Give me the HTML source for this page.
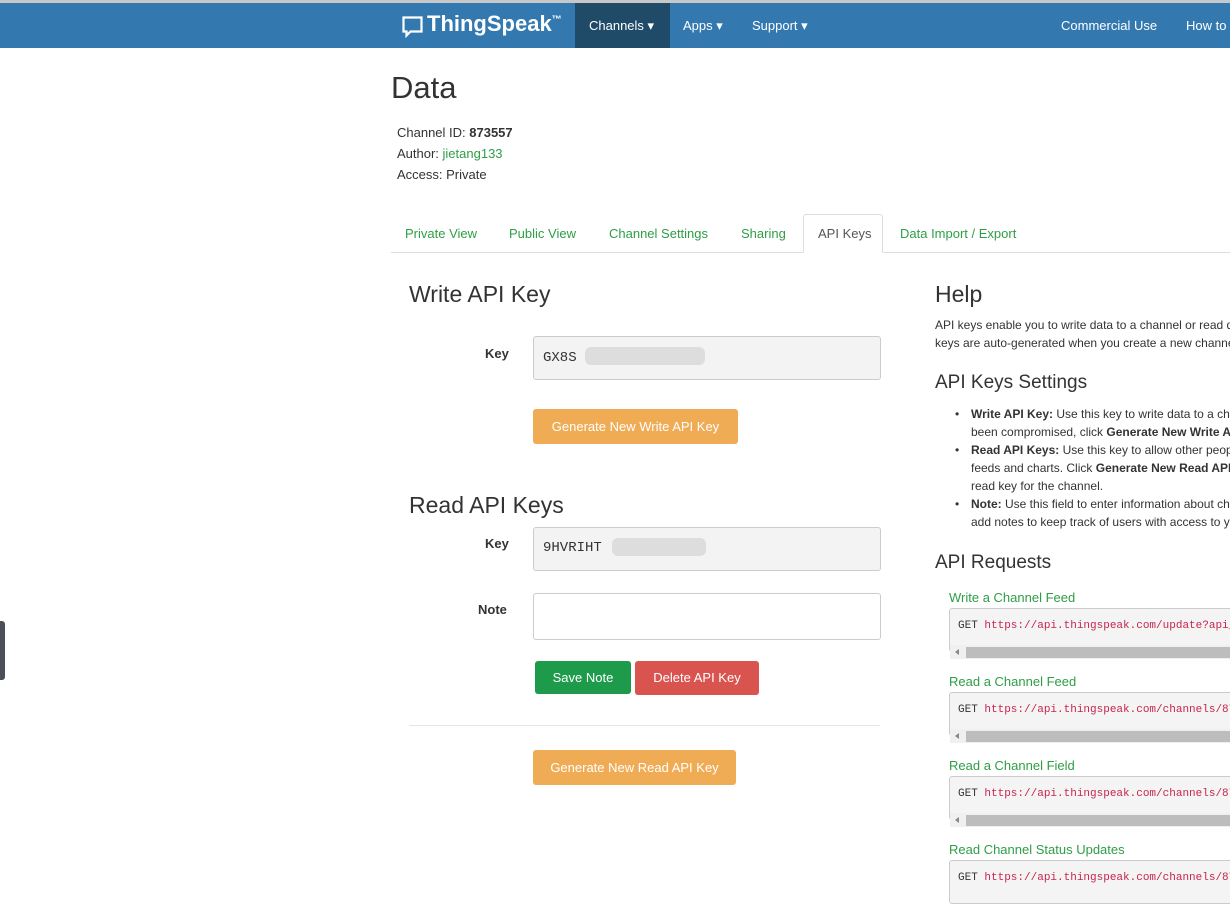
<!DOCTYPE html>
<html><head><meta charset="utf-8"><style>
*{box-sizing:border-box;margin:0;padding:0}
body{width:1230px;height:876px;overflow:hidden;background:#fff;font-family:"Liberation Sans",sans-serif;color:#333;position:relative;font-size:13px}
.a{position:absolute;white-space:nowrap}
.nav{position:absolute;left:0;top:0;width:1230px;height:48px;background:#3379b0;border-top:3px solid #c8c8c8}
.nl{color:#fff;font-size:13px}
.green{color:#2e9e46}
.h{font-weight:300;color:#333}
.inp{position:absolute;background:#f3f3f3;border:1px solid #ccc;border-radius:3px}
.btn{position:absolute;color:#fff;font-size:13px;text-align:center;border-radius:3px}
.pre{position:absolute;left:949px;width:290px;height:44px;background:#f4f4f4;border:1px solid #ccc;border-radius:3px;font-family:"Liberation Mono",monospace;font-size:11px;color:#333;padding:11px 8px;white-space:nowrap;overflow:hidden}
.pre span{color:#c7254e}
.sb{position:absolute;left:950px;width:290px;height:14px;background:#f0f0f0}
.sb i{position:absolute;left:16px;top:2px;right:0;height:11px;background:#bdbdbd}
.sb b{position:absolute;left:5px;top:4px;border-right:4px solid #888;border-top:3px solid transparent;border-bottom:3px solid transparent}
ul.hl{position:absolute;left:971px;top:405px;font-size:12px;line-height:18px;list-style:none;white-space:nowrap;width:259px}
ul.hl li{position:relative}
ul.hl li:before{content:"•";position:absolute;left:-16px}
</style></head><body>
<div class="nav">
 <svg class="a" style="left:402px;top:13px" width="22" height="22" viewBox="0 0 22 22"><path d="M1.5 1.5h18v14h-11l-4 4v-4h-3z" fill="none" stroke="#fff" stroke-width="2.2"/></svg>
 <div class="a" style="left:427px;top:8px;color:#fff;font-size:22px;font-weight:bold">ThingSpeak<sup style="font-size:10px">™</sup></div>
 <div class="a" style="left:575px;top:0;width:95px;height:45px;background:#1f4a68"></div>
 <div class="a nl" style="left:589px;top:15px">Channels ▾</div>
 <div class="a nl" style="left:683px;top:15px">Apps ▾</div>
 <div class="a nl" style="left:752px;top:15px">Support ▾</div>
 <div class="a nl" style="left:1061px;top:15px">Commercial Use</div>
 <div class="a nl" style="left:1186px;top:15px">How to</div>
</div>
<div class="a h" style="left:391px;top:70px;font-size:31px">Data</div>
<div class="a" style="left:397px;top:122px;line-height:21px">Channel ID: <b>873557</b><br>Author: <span class="green">jietang133</span><br>Access: Private</div>
<div class="a" style="left:391px;top:252px;width:839px;border-top:1px solid #ddd"></div>
<div class="a" style="left:803px;top:214px;width:80px;height:39px;border:1px solid #ddd;border-bottom:1px solid #fff;background:#fff;border-radius:3px 3px 0 0"></div>
<div class="a green" style="left:405px;top:226px">Private View</div>
<div class="a green" style="left:509px;top:226px">Public View</div>
<div class="a green" style="left:609px;top:226px">Channel Settings</div>
<div class="a green" style="left:741px;top:226px">Sharing</div>
<div class="a" style="left:818px;top:226px;color:#555">API Keys</div>
<div class="a green" style="left:900px;top:226px">Data Import / Export</div>

<div class="a h" style="left:409px;top:281px;font-size:23px">Write API Key</div>
<div class="a" style="left:485px;top:346px;font-weight:bold">Key</div>
<div class="inp" style="left:533px;top:336px;width:348px;height:44px"></div>
<div class="a" style="left:543px;top:350px;font-family:'Liberation Mono',monospace;font-size:14px">GX8S</div>
<div class="a" style="left:585px;top:347px;width:120px;height:18px;background:#ddd;border-radius:6px"></div>
<div class="btn" style="left:533px;top:409px;width:205px;height:35px;background:#efac55;line-height:35px">Generate New Write API Key</div>

<div class="a h" style="left:409px;top:492px;font-size:23px">Read API Keys</div>
<div class="a" style="left:485px;top:536px;font-weight:bold">Key</div>
<div class="inp" style="left:533px;top:527px;width:348px;height:44px"></div>
<div class="a" style="left:543px;top:540px;font-family:'Liberation Mono',monospace;font-size:14px">9HVRIHT</div>
<div class="a" style="left:612px;top:538px;width:94px;height:18px;background:#ddd;border-radius:6px"></div>
<div class="a" style="left:478px;top:602px;font-weight:bold">Note</div>
<div class="a" style="left:533px;top:593px;width:348px;height:47px;border:1px solid #ccc;border-radius:3px"></div>
<div class="btn" style="left:535px;top:661px;width:96px;height:33px;background:#1d9b4b;line-height:33px">Save Note</div>
<div class="btn" style="left:635px;top:661px;width:124px;height:34px;background:#d9534f;line-height:34px">Delete API Key</div>
<div class="a" style="left:409px;top:725px;width:471px;border-top:1px solid #e5e5e5"></div>
<div class="btn" style="left:533px;top:750px;width:203px;height:35px;background:#efac55;line-height:35px">Generate New Read API Key</div>

<div class="a h" style="left:935px;top:281px;font-size:23px">Help</div>
<div class="a" style="left:935px;top:316px;font-size:12px;line-height:18px">API keys enable you to write data to a channel or read d<br>keys are auto-generated when you create a new channel</div>
<div class="a h" style="left:935px;top:372px;font-size:19px">API Keys Settings</div>
<ul class="hl">
<li><b>Write API Key:</b> Use this key to write data to a chan<br>been compromised, click <b>Generate New Write API</b></li>
<li><b>Read API Keys:</b> Use this key to allow other people<br>feeds and charts. Click <b>Generate New Read API K</b><br>read key for the channel.</li>
<li><b>Note:</b> Use this field to enter information about ch<br>add notes to keep track of users with access to yo</li>
</ul>
<div class="a h" style="left:935px;top:552px;font-size:19px">API Requests</div>
<div class="a green" style="left:949px;top:590px">Write a Channel Feed</div>
<div class="pre" style="top:608px">GET <span>https://api.thingspeak.com/update?api_</span></div>
<div class="sb" style="top:645px"><b></b><i></i></div>
<div class="a green" style="left:949px;top:674px">Read a Channel Feed</div>
<div class="pre" style="top:692px">GET <span>https://api.thingspeak.com/channels/87</span></div>
<div class="sb" style="top:729px"><b></b><i></i></div>
<div class="a green" style="left:949px;top:758px">Read a Channel Field</div>
<div class="pre" style="top:776px">GET <span>https://api.thingspeak.com/channels/87</span></div>
<div class="sb" style="top:813px"><b></b><i></i></div>
<div class="a green" style="left:949px;top:842px">Read Channel Status Updates</div>
<div class="pre" style="top:860px">GET <span>https://api.thingspeak.com/channels/87</span></div>
<div class="a" style="left:0;top:621px;width:5px;height:59px;background:#4a4f5a;border-radius:0 3px 3px 0"></div>
</body></html>
